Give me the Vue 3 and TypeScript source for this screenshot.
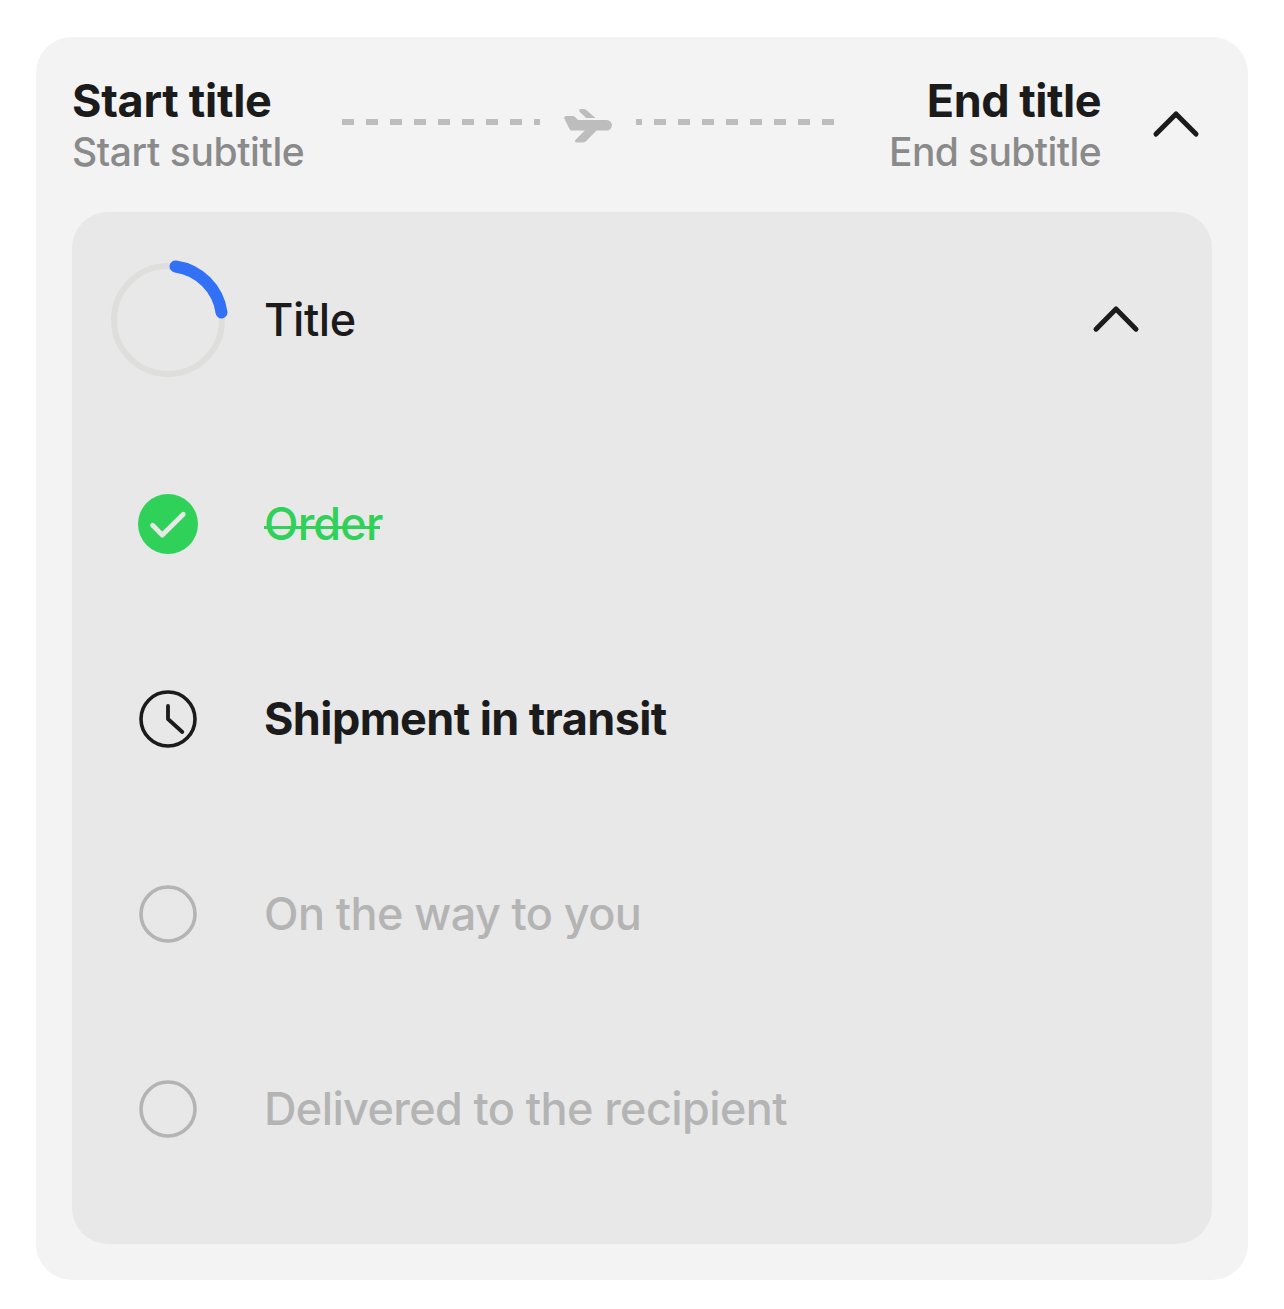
<script setup lang="ts">
type StepState = 'done' | 'current' | 'pending'

interface Step {
  label: string
  state: StepState
}

const steps: Step[] = [
  { label: 'Order', state: 'done' },
  { label: 'Shipment in transit', state: 'current' },
  { label: 'On the way to you', state: 'pending' },
  { label: 'Delivered to the recipient', state: 'pending' },
]
</script>

<template>
  <main class="card">
    <header class="route">
      <div class="place">
        <div class="title start-title">Start title</div>
        <div class="subtitle start-subtitle">Start subtitle</div>
      </div>
      <div class="track">
        <svg class="dashes" width="198" height="6" viewBox="0 0 198 6">
          <path d="M0 3H198" stroke="#bdbdbd" stroke-width="6" stroke-dasharray="12 12" />
        </svg>
        <svg class="plane" width="48" height="36" viewBox="0 0 48 36" fill="#bdbdbd">
          <path d="M17 1H19.6Q21.2 1 22.3 2L31.5 10H22.2L15.4 3.6Q14.3 1.2 17 1Z" />
          <path d="M1.8 8H9Q10.3 8 11.2 8.9L14 12H42.7A5.2 5.2 0 0 1 42.7 22.5H32.5L22.2 33.1Q20.9 34.5 19 34.5H12.4Q10 34 11.6 31.8L20.8 22.5H8Q6.2 22.5 5.5 21L.3 10.5Q-.3 8.6 1.8 8Z" />
        </svg>
        <svg class="dashes" width="198" height="6" viewBox="0 0 198 6">
          <path d="M0 3H198" stroke="#bdbdbd" stroke-width="6" stroke-dasharray="12 12" stroke-dashoffset="6" />
        </svg>
      </div>
      <div class="place end">
        <div class="title end-title">End title</div>
        <div class="subtitle end-subtitle">End subtitle</div>
      </div>
      <svg class="chevron" width="48" height="30" viewBox="0 0 48 30">
        <path d="M4 24.1L24 3.9L44 24.1" />
      </svg>
    </header>

    <section class="panel">
      <div class="summary">
        <div class="mark">
          <svg width="120" height="120" viewBox="0 0 120 120" fill="none">
            <circle cx="60" cy="60" r="54" stroke="#dededd" stroke-width="6" />
            <path d="M67.5 6.5A54 54 0 0 1 113.5 52.5" stroke="#3270f6" stroke-width="12" stroke-linecap="round" />
          </svg>
        </div>
        <div class="summary-title">Title</div>
        <svg class="chevron" width="48" height="30" viewBox="0 0 48 30">
          <path d="M4 24.2L24 4L44 24.2" />
        </svg>
      </div>

      <div v-for="(step, i) in steps" :key="step.label" class="step" :class="[step.state, `step-${i}`]">
        <div class="mark">
          <svg width="60" height="60" viewBox="0 0 60 60" fill="none" stroke-linecap="round" stroke-linejoin="round">
            <template v-if="step.state === 'done'">
              <circle cx="30" cy="30" r="30" fill="#30d158" />
              <path d="M14.6 31.2L24.3 41L45.3 20.3" stroke="#e8e8e8" stroke-width="4.8" />
            </template>
            <template v-else>
              <circle cx="30" cy="30" r="27" stroke="currentColor" stroke-width="3.6" />
              <path v-if="step.state === 'current'" d="M30 17V30L44.3 43" stroke="currentColor" stroke-width="3.8" />
            </template>
          </svg>
        </div>
        <span class="label">{{ step.label }}</span>
      </div>
    </section>
  </main>
</template>

<style>
body {
  margin: 0;
  background: #fff;
}
</style>

<style scoped>
.card {
  box-sizing: border-box;
  width: 1212px;
  height: 1243px;
  margin: 37px 36px 29px;
  padding: 0 36px 36px;
  display: flex;
  flex-direction: column;
  border-radius: 36px;
  background: #f3f3f3;
  color: #1b1b1b;
  font-family: Inter, sans-serif;
  font-size: 45px;
  font-weight: 500;
  white-space: nowrap;
}
svg {
  display: block;
  flex: none;
}
.route {
  height: 175px;
  display: flex;
  align-items: center;
}
.place {
  width: 270px;
  padding-top: 1px;
}
.end {
  width: 267px;
  text-align: right;
}
.title {
  font-weight: 700;
  line-height: 54px;
  letter-spacing: -0.3px;
}
.end-title {
  letter-spacing: -0.5px;
}
.subtitle {
  color: #8a8a8a;
  font-size: 39px;
  line-height: 48px;
  letter-spacing: -0.4px;
}
.end-subtitle {
  letter-spacing: -0.6px;
}
.track {
  display: flex;
  align-items: center;
  gap: 24px;
  padding-bottom: 5px;
}
.plane {
  margin-top: 7px;
}
.chevron {
  fill: none;
  stroke: #1b1b1b;
  stroke-width: 5;
  stroke-linecap: round;
  stroke-linejoin: round;
}
.route .chevron {
  margin-left: 51px;
}
.panel {
  flex: 1;
  border-radius: 36px;
  background: #e8e8e8;
}
.summary {
  height: 216px;
  display: flex;
  align-items: center;
}
.summary-title {
  padding-bottom: 2px;
  letter-spacing: -0.4px;
}
.summary .chevron {
  margin: 0 72px 0 auto;
}
.mark {
  width: 192px;
  flex: none;
  display: flex;
  justify-content: center;
}
.step {
  height: 195px;
  display: flex;
  align-items: center;
}
.step-0 {
  height: 192px;
  margin-bottom: 1px;
}
.label {
  position: relative;
  letter-spacing: -0.62px;
}
.done {
  color: #30d158;
}
.done .label {
  padding-bottom: 2px;
  letter-spacing: -0.85px;
}
.done .label::after {
  content: '';
  position: absolute;
  left: 0;
  top: 30px;
  width: 116px;
  height: 3px;
  background: currentColor;
}
.current .label {
  font-weight: 700;
  letter-spacing: -0.6px;
}
.pending {
  color: #b4b4b4;
}
</style>
